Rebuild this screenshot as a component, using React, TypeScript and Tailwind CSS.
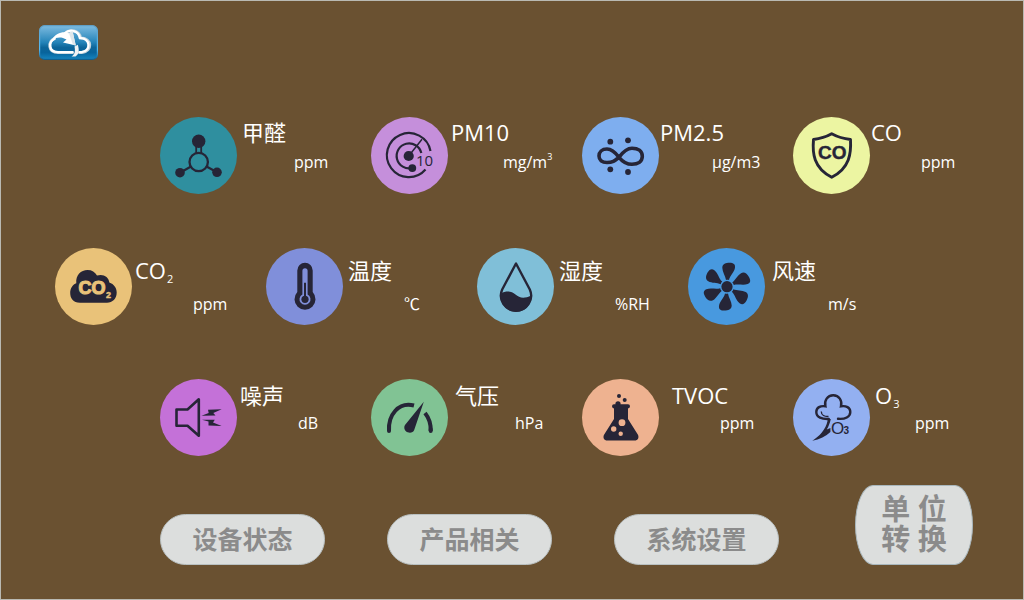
import type { ReactNode } from "react";

const INK = "#262537";

function Molecule() {
  return (
    <g>
      <g stroke={INK} strokeWidth="1.8" fill="none">
        <path d="M36.2 28V37M41.2 28V37" />
        <path d="M31 49.5L20 55.7M46.5 49.5L57 55.3" strokeWidth="2.2" />
        <circle cx="38.7" cy="45" r="9.2" strokeWidth="2.3" />
      </g>
      <circle cx="38.7" cy="24.3" r="6.7" fill={INK} />
      <circle cx="20" cy="55.7" r="4.8" fill={INK} />
      <circle cx="57" cy="55.3" r="4.8" fill={INK} />
    </g>
  );
}

function Radar() {
  return (
    <g>
      <g stroke={INK} strokeWidth="2.2" fill="none">
        <path d="M59.5 34A22 22 0 1 0 54.5 52.5" />
        <path d="M50.3 36A12.5 12.5 0 1 0 41.3 51" />
        <path d="M37.7 39L51 22.3" strokeWidth="1.5" />
      </g>
      <circle cx="37.7" cy="39" r="5.1" fill={INK} />
      <circle cx="41.3" cy="51.1" r="3.9" fill={INK} />
      <text x="45" y="49.3" fontSize="15" fontFamily="Open Sans, sans-serif" fill={INK}>10</text>
    </g>
  );
}

function Particles() {
  return (
    <g fill={INK}>
      <circle cx="28.3" cy="24.7" r="2.9" />
      <circle cx="46" cy="23.3" r="2.9" />
      <circle cx="28.3" cy="52.3" r="2.9" />
      <circle cx="46" cy="55" r="2.9" />
      <path
        d="M37 40.3C33 35 29 32 25 32C20 32 17 35 17 39C17 43 20 45.5 25 45.5C31 45.5 33 43.5 37 40.3C41 35 45 31.3 50 31.3C56 31.3 60.3 34 60.3 39.3C60.3 44.5 56 47.3 50 47.3C44 47.3 40 44 37 40.3Z"
        fill="none"
        stroke={INK}
        strokeWidth="3.6"
      />
    </g>
  );
}

function Shield() {
  return (
    <g>
      <path
        d="M38.7 16.8C33 20 27 21.8 20.5 22.5C19.3 36 20.5 51 38.7 60.2C57 51 58.2 36 57.5 22.5C50.5 21.8 44.5 20 38.7 16.8Z"
        fill="none"
        stroke={INK}
        strokeWidth="2.9"
        strokeLinejoin="round"
      />
      <text x="39.2" y="42.3" fontSize="19" fontWeight="700" textAnchor="middle" fontFamily="Liberation Sans, sans-serif" fill={INK} stroke={INK} strokeWidth="0.4">CO</text>
    </g>
  );
}

function CarbonCloud() {
  return (
    <g>
      <path
        d="M25 54.8C18 54.8 15.2 50 15.2 45C15.2 40 18 36.5 21.3 35.3C20.5 27 26 22 32.5 22C37 22 40 24 42 27.6C47.5 25.4 54 28.5 54.3 34.5C59 36 61.7 40 61.7 44.5C61.7 50.5 57.5 54.8 52 54.8Z"
        fill={INK}
      />
      <g fill="#e9c279" stroke="#e9c279" fontFamily="Liberation Sans, sans-serif" fontWeight="700">
        <text x="37" y="46.2" fontSize="18" textAnchor="middle" strokeWidth="1.1">CO</text>
        <text x="51" y="49.8" fontSize="9" strokeWidth="0.4">2</text>
      </g>
    </g>
  );
}

function Thermometer() {
  return (
    <g>
      <path d="M31.3 22.5A7.7 7.7 0 0 1 46.7 22.5V44A10.5 10.5 0 1 1 31.3 44Z" fill={INK} />
      <path d="M36.4 22.8A2.6 2.6 0 0 1 41.6 22.8V46.5A5.5 5.5 0 1 1 36.4 46.5Z" fill="#808fda" />
      <path d="M39 34.7V51" stroke={INK} strokeWidth="2" />
      <circle cx="39" cy="51.3" r="3.6" fill={INK} />
    </g>
  );
}

function Droplet() {
  return (
    <g>
      <path d="M39 15.5L25.2 41.5A15.1 15.1 0 1 0 52.8 41.5Z" fill="none" stroke={INK} strokeWidth="2.4" strokeLinejoin="round" />
      <path d="M23.6 45.2C30 42.5 34.5 43 38.5 46.5C42.5 50 47 51 54.3 47.5C54.5 57 48 63.7 39 63.7C30 63.7 22.5 56.5 23.6 45.2Z" fill={INK} />
    </g>
  );
}

function Fan() {
  return (
    <g fill={INK}>
      <circle cx="39" cy="38.7" r="5.6" />
      {[0, 60, 120, 180, 240, 300].map((angle) => (
        <path
          key={angle}
          transform={`rotate(${angle} 39 38.7)`}
          d="M38 32C37.5 28 34.3 24 34.3 19.8C34.3 16 38 14.8 41.5 14.8C45.5 14.8 47.4 16.3 47 19.5C46.5 24 42 27.5 41 32C40 31.6 39 31.6 38 32Z"
        />
      ))}
    </g>
  );
}

function Speaker() {
  return (
    <g>
      <path d="M16.5 30.5H27.5L38.8 20.3V56.7L27.5 46.7H16.5Z" fill="none" stroke={INK} strokeWidth="2.6" strokeLinejoin="round" />
      <path d="M48 30.7L61.7 30.3L53.3 34L55.5 36.5L41.5 36.7L48.7 34Z" fill={INK} />
      <path d="M42 40.7H54.8L53 43.6L61.7 47L48.5 46.6V42.6Z" fill={INK} />
    </g>
  );
}

function Gauge() {
  return (
    <g>
      <g fill="none" stroke={INK} strokeWidth="4">
        <path d="M18 52C17 36 27.5 22.5 43 26.5" />
        <path d="M18 48V52M59.7 50V52" strokeLinecap="round" />
        <path d="M54 34C58 39 60 44.5 59.7 52" />
      </g>
      <path d="M52.8 22.8L43.2 51C41.5 55.5 33 54 33.3 48.2C33.4 47 34 46 34.6 45.3Z" fill={INK} />
    </g>
  );
}

function Flask() {
  return (
    <g fill={INK}>
      <circle cx="37" cy="17" r="2" />
      <circle cx="42.7" cy="21" r="2" />
      <circle cx="36" cy="24.8" r="2.6" />
      <path d="M32 25.2H46Q48 25.2 48 27.2T46 29.4V40L55.8 55.5C57.4 58.5 56 61.6 52.5 61.6H25.5C22 61.6 20.5 58.5 22.2 55.5L32 40V29.4Q30 29.2 30 27.2T32 25.2Z" />
      <g fill="#eeb290">
        <circle cx="40" cy="43.7" r="3.4" />
        <circle cx="31.7" cy="50" r="2.7" />
        <circle cx="38.7" cy="54.7" r="2.2" />
      </g>
    </g>
  );
}

function OzoneCloud() {
  return (
    <g>
      <path
        d="M45 39.8C52 40.5 57.3 38 57.3 33C57.3 28.5 53 26.5 48 27.3C49.5 21.5 46 16.3 40.2 16.3C34.5 16.3 31 21.5 32.4 27.3C27.5 26.5 23.3 28.5 23.3 33C23.3 38.5 29 40.3 35.8 40"
        fill="none"
        stroke={INK}
        strokeWidth="2.4"
        strokeLinecap="round"
      />
      <path d="M28.3 32.5C28.3 36.5 31.5 37.6 35.5 37.5" fill="none" stroke={INK} strokeWidth="1.3" />
      <path d="M34.5 40H37.8C37 43.5 35.8 47 33.8 50.5L37.4 49V53C33 57.5 26.5 60.5 19.3 61.8C26 57.5 33 50.5 34.5 42Z" fill={INK} />
      <text x="38" y="55.2" fontSize="17" fontFamily="Liberation Sans, sans-serif" fill={INK}>O</text>
      <text x="50.5" y="55.4" fontSize="10" fontWeight="700" fontFamily="Liberation Sans, sans-serif" fill={INK}>3</text>
    </g>
  );
}

type Sensor = {
  id: string;
  label: ReactNode;
  unit: ReactNode;
  color: string;
  icon: ReactNode;
  labelPad: string;
  unitPad: string;
};

const subscript = "bottom-0 ml-px align-[-4px] text-[11px] leading-none";
const superscript = "top-0 align-[8px] text-[9px] leading-none";

const rowOne: Sensor[] = [
  { id: "ch2o", label: "甲醛", unit: "ppm", color: "bg-[#2f8f9f]", icon: <Molecule />, labelPad: "pl-1", unitPad: "pl-14" },
  { id: "pm10", label: "PM10", unit: <>mg/m<sup className={superscript}>3</sup></>, color: "bg-[#c58fdb]", icon: <Radar />, labelPad: "pl-0.5", unitPad: "pl-13.5" },
  { id: "pm25", label: "PM2.5", unit: "µg/m3", color: "bg-[#7eaeef]", icon: <Particles />, labelPad: "pl-0", unitPad: "pl-13" },
  { id: "co", label: "CO", unit: "ppm", color: "bg-[#ecf5a2]", icon: <Shield />, labelPad: "pl-0", unitPad: "pl-12.5" },
];

const rowTwo: Sensor[] = [
  { id: "co2", label: <>CO<sub className={subscript}>2</sub></>, unit: "ppm", color: "bg-[#e9c279]", icon: <CarbonCloud />, labelPad: "pl-0.5", unitPad: "pl-15" },
  { id: "temp", label: "温度", unit: "℃", color: "bg-[#808fda]", icon: <Thermometer />, labelPad: "pl-1", unitPad: "pl-15" },
  { id: "hum", label: "湿度", unit: "%RH", color: "bg-[#80bfd8]", icon: <Droplet />, labelPad: "pl-1", unitPad: "pl-15" },
  { id: "wind", label: "风速", unit: "m/s", color: "bg-[#4899df]", icon: <Fan />, labelPad: "pl-1.5", unitPad: "pl-15.5" },
];

const rowThree: Sensor[] = [
  { id: "noise", label: "噪声", unit: "dB", color: "bg-[#c471d8]", icon: <Speaker />, labelPad: "pl-0.5", unitPad: "pl-15" },
  { id: "press", label: "气压", unit: "hPa", color: "bg-[#81c394]", icon: <Gauge />, labelPad: "pl-1.5", unitPad: "pl-16.5" },
  { id: "tvoc", label: "TVOC", unit: "ppm", color: "bg-[#eeb290]", icon: <Flask />, labelPad: "pl-3", unitPad: "pl-15" },
  { id: "o3", label: <>O<sub className={subscript}>3</sub></>, unit: "ppm", color: "bg-[#93b0f1]", icon: <OzoneCloud />, labelPad: "pl-1", unitPad: "pl-11" },
];

function SensorRow({ sensors, inset, textClass }: { sensors: Sensor[]; inset: string; textClass: string }) {
  return (
    <ul className={`grid grid-cols-4 ${inset}`}>
      {sensors.map((s) => (
        <li key={s.id} className="flex items-start">
          <span className={`size-[77px] shrink-0 rounded-full ${s.color}`}>
            <svg viewBox="0 0 77 77" className="block size-full" aria-hidden="true">{s.icon}</svg>
          </span>
          <div className={`flex flex-col pl-px whitespace-nowrap text-white ${textClass}`}>
            <h2 className={`text-[22px] leading-7 ${s.labelPad}`}>{s.label}</h2>
            <p className={`text-base leading-6 ${s.unitPad}`}>{s.unit}</p>
          </div>
        </li>
      ))}
    </ul>
  );
}

function Logo() {
  return (
    <svg viewBox="0 0 59 35" className="block h-[35px] w-[59px]" aria-hidden="true">
      <defs>
        <linearGradient id="badge" x1="0" y1="0" x2="0" y2="1">
          <stop offset="0" stopColor="#7dbbe0" />
          <stop offset="0.5" stopColor="#2383b8" />
          <stop offset="0.65" stopColor="#0d6599" />
          <stop offset="0.8" stopColor="#08649c" />
          <stop offset="1" stopColor="#1585c0" />
        </linearGradient>
        <linearGradient id="edge" x1="0" y1="0" x2="0" y2="1">
          <stop offset="0" stopColor="#5f9fc6" />
          <stop offset="0.7" stopColor="#56b9ef" />
          <stop offset="1" stopColor="#11608f" />
        </linearGradient>
      </defs>
      <rect x="0.6" y="0.6" width="57.8" height="33.8" rx="5" fill="url(#badge)" stroke="url(#edge)" strokeWidth="1.2" />
      <g fill="none" strokeLinecap="round">
        <path d="M33.5 27.6H19C9 27.6 8.5 17 15.5 13.5M26 8.5C31 3.5 40.5 5.5 41.5 13C53.5 13 53.5 26.5 43 27.6H40.5" stroke="#c3d3dc" strokeWidth="3" />
        <path d="M33.5 27.1H19C9.5 27.1 9 17 15.5 13.8M26 8C31 3.7 39.5 5.5 40.8 12.8C52 13.5 52 26 42.5 27.1H40.5" stroke="#fff" strokeWidth="2.3" />
      </g>
      <path d="M13 14.5C17 8 24 6 30 8.2L33.5 6L36.8 20.5L24 17.5L27.5 14.5C22.5 11.5 18 12 13 14.5Z" fill="#fff" />
      <path d="M30 8.2L33.5 6L36.8 20.5L34 19.8Z" fill="#dfe7eb" />
      <path d="M35.5 21.5L38.8 19.8C40.5 25.5 40 29.5 36.5 31.5H32.5C35.8 29.5 36.5 26 35.5 21.5Z" fill="#f1f3f4" />
    </svg>
  );
}

function PillButton({ children }: { children: ReactNode }) {
  return (
    <button
      type="button"
      className="h-[51px] w-[165px] rounded-full border border-[#b9c0c1] bg-[#dcdedd] pb-0.5 text-[25px] leading-8 font-bold whitespace-nowrap text-[#8b8b8b]"
    >
      {children}
    </button>
  );
}

export default function App() {
  return (
    <div
      className="flex min-h-screen flex-col border border-[#b9b9b2] bg-[#6a5131] font-['Open_Sans','Noto_Sans_CJK_SC',sans-serif]"
      lang="zh-CN"
    >
      <header className="flex pt-6 pl-[38px]">
        <a href="#" aria-label="首页">
          <Logo />
        </a>
      </header>

      <main className="mt-[57px] flex flex-col gap-[54px]">
        <SensorRow sensors={rowOne} inset="pr-[19px] pl-[159px]" textClass="gap-1 pt-px" />
        <SensorRow sensors={rowTwo} inset="pr-[124px] pl-[54px]" textClass="gap-2 pt-2" />
        <SensorRow sensors={rowThree} inset="pr-[19px] pl-[159px]" textClass="gap-0.5 pt-0.5" />
      </main>

      <footer className="mt-[29px] flex items-end justify-between pr-[50px] pl-[159px]">
        <nav className="flex gap-[62px]">
          <PillButton>设备状态</PillButton>
          <PillButton>产品相关</PillButton>
          <PillButton>系统设置</PillButton>
        </nav>
        <button
          type="button"
          className="h-20 w-[118px] rounded-[18px/40px] border border-[#a9b7bd] bg-[#dcdedd] pb-0.5 text-[29px] leading-[30px] font-bold text-[#8b8b8b]"
        >
          单 位<br />转 换
        </button>
      </footer>
    </div>
  );
}
